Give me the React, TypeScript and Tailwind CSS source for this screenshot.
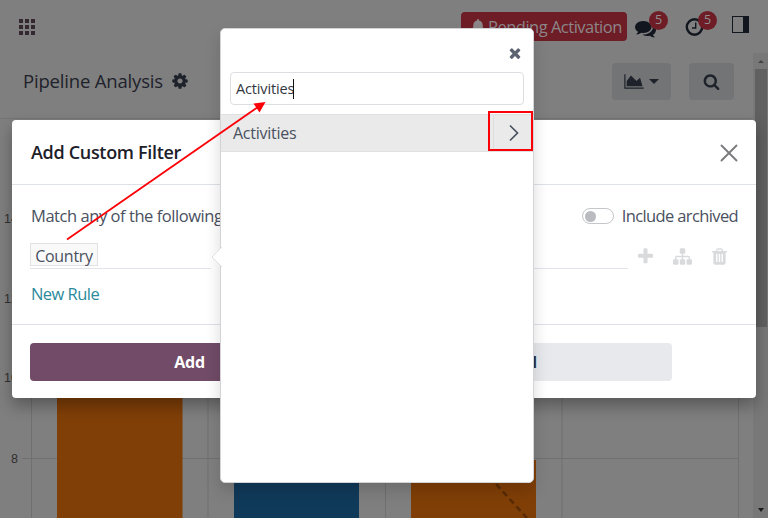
import type { ReactNode } from 'react';
import { FaBell } from 'react-icons/fa';

const COG =
  'M1152 896q0-106-75-181t-181-75-181 75-75 181 75 181 181 75 181-75 75-181zm512-109v222q0 12-8 23t-20 13l-185 28q-19 54-39 91 35 50 107 138 10 12 10 25t-9 23q-27 37-99 108t-94 71q-12 0-26-9l-138-108q-44 23-91 38-16 136-29 186-7 28-36 28h-222q-14 0-24.5-8.500t-11.500-21.500l-28-184q-49-16-90-37l-141 107q-10 9-25 9-14 0-25-11-126-114-165-168-7-10-7-23 0-12 8-23 15-21 51-66.500t54-70.500q-27-50-41-99l-183-27q-13-2-21-12.500t-8-23.500v-222q0-12 8-23t19-13l186-28q14-46 39-92-40-57-107-138-10-12-10-24 0-10 9-23 26-36 98.500-107.500t94.500-71.500q13 0 26 10l138 107q44-23 91-38 16-136 29-186 7-28 36-28h222q14 0 24.500 8.500t11.500 21.500l28 184q49 16 90 37l142-107q9-9 24-9 13 0 25 10 129 119 165 170 7 8 7 22 0 12-8 23-15 21-51 66.500t-54 70.500q26 50 41 98l183 28q13 2 21 12.500t8 23.500z';
const TRASH =
  'M704 1376v-704q0-14-9-23t-23-9h-64q-14 0-23 9t-9 23v704q0 14 9 23t23 9h64q14 0 23-9t9-23zm256 0v-704q0-14-9-23t-23-9h-64q-14 0-23 9t-9 23v704q0 14 9 23t23 9h64q14 0 23-9t9-23zm256 0v-704q0-14-9-23t-23-9h-64q-14 0-23 9t-9 23v704q0 14 9 23t23 9h64q14 0 23-9t9-23zm-544-992h448l-48-117q-7-9-17-11h-317q-10 2-17 11zm928 32v64q0 14-9 23t-23 9h-96v948q0 83-47 143.500t-113 60.500h-832q-66 0-113-58.500t-47-141.500v-952h-96q-14 0-23-9t-9-23v-64q0-14 9-23t23-9h309l70-167q15-37 54-63t79-26h320q40 0 79 26t54 63l70 167h309q14 0 23 9t9 23z';
const PLUS =
  'M1600 736v192q0 40-28 68t-68 28h-416v416q0 40-28 68t-68 28h-192q-40 0-68-28t-28-68v-416h-416q-40 0-68-28t-28-68v-192q0-40 28-68t68-28h416v-416q0-40 28-68t68-28h192q40 0 68 28t28 68v416h416q40 0 68 28t28 68z';
const SITEMAP =
  'M1792 1248v320q0 40-28 68t-68 28h-320q-40 0-68-28t-28-68v-320q0-40 28-68t68-28h96v-192h-512v192h96q40 0 68 28t28 68v320q0 40-28 68t-68 28h-320q-40 0-68-28t-28-68v-320q0-40 28-68t68-28h96v-192h-512v192h96q40 0 68 28t28 68v320q0 40-28 68t-68 28h-320q-40 0-68-28t-28-68v-320q0-40 28-68t68-28h96v-192q0-52 38-90t90-38h512v-192h-96q-40 0-68-28t-28-68v-320q0-40 28-68t68-28h320q40 0 68 28t28 68v320q0 40-28 68t-68 28h-96v192h512q52 0 90 38t38 90v192h96q40 0 68 28t28 68z';
const SEARCH =
  'M1216 832q0-185-131.500-316.500t-316.500-131.500-316.500 131.500-131.500 316.500 131.500 316.500 316.500 131.500 316.500-131.500 131.500-316.500zm512 832q0 52-38 90t-90 38q-54 0-90-38l-343-342q-179 124-399 124-143 0-273.500-55.500t-225-150-150-225-55.500-273.500 55.500-273.500 150-225 225-150 273.500-55.500 273.500 55.500 225 150 150 225 55.500 273.500q0 220-124 399l343 343q37 37 37 90z';
const TIMES =
  'M1490 1322q0 40-28 68l-136 136q-28 28-68 28t-68-28l-294-294-294 294q-28 28-68 28t-68-28l-136-136q-28-28-28-68t28-68l294-294-294-294q-28-28-28-68t28-68l136-136q28-28 68-28t68 28l294 294 294-294q28-28 68-28t68 28l136 136q28 28 28 68t-28 68l-294 294 294 294q28 28 28 68z';
const COMMENTS =
  'M1408 768q0 139-94 257t-256.500 186.500-353.500 68.500q-86 0-176-16-124 88-278 128-36 9-86 16h-3q-11 0-20.500-8t-11.500-21q-1-3-1-6.500t.5-6.500 2-6l2.500-5 3.500-5.500 4-5 4.500-5 4-4.500q5-6 23-25t26-29.500 22.500-29 25-38.500 20.500-44q-124-72-195-177t-71-224q0-139 94-257t256.500-186.500 353.500-68.500 353.500 68.500 256.500 186.500 94 257zm384 256q0 120-71 224.500t-195 176.500q10 24 20.500 44t25 38.500 22.500 29 26 29.500 23 25q1 1 4 4.500t4.500 5 4 5 3.500 5.500l2.500 5 2 6 .5 6.500-1 6.500q-3 14-13 22t-22 7q-50-7-86-16-154-40-278-128-90 16-176 16-271 0-472-132 58 4 88 4 161 0 309-45t264-129q125-92 192-212t67-254q0-77-23-152 129 71 204 178t75 230z';

function Icon({ d, className, box = '0 0 1792 1792' }: { d: string; className: string; box?: string }) {
  return (
    <svg viewBox={box} fill="currentColor" className={`shrink-0 ${className}`}>
      <path d={d} />
    </svg>
  );
}

function Counter({ children }: { children: ReactNode }) {
  return (
    <span className="absolute left-[14px] top-[-6px] flex h-[19px] w-[19px] items-center justify-center rounded-full bg-[#6e1d26] text-[12.500px] leading-none text-[#8f8f8f]">
      {children}
    </span>
  );
}

function Navbar() {
  return (
    <header className="flex h-[53px] shrink-0 items-center text-[#11161f]">
      <div className="ml-[19px] grid h-4 w-4 grid-cols-3 gap-[2px]">
        {Array.from({ length: 9 }, (_, i) => (
          <span key={i} className="h-[4px] w-[4px] bg-[#33282f]" />
        ))}
      </div>
      <div className="ml-[426px] flex h-[29px] w-[166px] items-center whitespace-nowrap rounded-[4px] bg-[#6e1d26] pl-[10px] text-[#8c8689]">
        <FaBell className="h-[15px] w-[14px]" />
        <span className="ml-[3px] pt-px text-[16.500px] tracking-[-0.5px]">Pending Activation</span>
      </div>
      <div className="relative ml-[8px] h-[20px] w-[20px]">
        <Icon d={COMMENTS} className="mt-px h-[21px] w-[21px]" />
        <Counter>5</Counter>
      </div>
      <div className="relative ml-[29px] h-[20px] w-[20px]">
        <svg viewBox="0 0 20 20" className="h-[20px] w-[20px]" fill="none" stroke="currentColor">
          <circle cx="10.500" cy="10" r="7.700" strokeWidth="2.400" />
          <path d="M11.700 5.500v5.500H8" strokeWidth="1.400" />
        </svg>
        <Counter>5</Counter>
      </div>
      <div className="ml-[28px] flex h-[17px] w-[17px] -translate-y-[2px] justify-end border border-[#11161f]">
        <span className="h-full w-[5px] bg-[#11161f]" />
      </div>
    </header>
  );
}

function ControlPanel() {
  return (
    <div className="flex h-[66px] shrink-0 items-center border-b border-[#747474] pb-[9px] text-[#1e222b]">
      <h1 className="ml-[23px] w-[150px] whitespace-nowrap text-[18.500px] tracking-[-0.18px]">Pipeline Analysis</h1>
      <Icon d={COG} className="-ml-[2px] h-[18px] w-[18px]" />
      <div className="ml-[423px] flex h-[37px] w-[59px] items-center rounded-[4px] bg-[#737475] pl-[12px]">
        <Icon
          d="M2048 1536v128h-2048v-1536h128v1408h1920zm-384-1024l256 896h-1664v-576l448-576 576 576z"
          box="0 0 2048 1792"
          className="h-[17px] w-[20px]"
        />
        <span className="ml-[5px] border-x-[5px] border-t-[5px] border-x-transparent border-t-[#1e222b]" />
      </div>
      <div className="ml-[18px] flex h-[37px] w-[45px] items-center justify-center rounded-[4px] bg-[#737475]">
        <Icon d={SEARCH} className="h-[17px] w-[17px]" />
      </div>
    </div>
  );
}

function Chart() {
  return (
    <svg viewBox="0 119 768 399" className="h-[399px] w-[768px] shrink-0">
      <g stroke="#707070" strokeWidth="1">
        <path d="M22 218.500H738M22 298.500H738M22 378.500H738M22 458.500H738" />
        <path d="M31.500 140V518M208 140V518M385.500 140V518M562 140V518M738.500 140V518" />
      </g>
      <g fontFamily="Liberation Sans, Arial, sans-serif" fontSize="12.500" fill="#303030">
        <text x="4" y="223">14</text>
        <text x="4" y="303">12</text>
        <text x="4" y="382">10</text>
        <text x="11" y="463">8</text>
      </g>
      <path d="M57 200H182.500V518H57z" fill="#803f07" />
      <path d="M234 200H359V518H234z" fill="#103a5a" />
      <path d="M411 460H536V518H411z" fill="#803f07" />
      <path d="M476 462L527 518" stroke="#572b06" strokeWidth="2.500" strokeDasharray="6 4" />
    </svg>
  );
}

function Scrollbar() {
  return (
    <div className="absolute right-0 top-[53px] flex h-[465px] w-[15px] flex-col items-center bg-[#787878]">
      <span className="mt-[7px] border-x-[3px] border-b-[3px] border-x-transparent border-b-[#454545]" />
      <span className="mt-[6px] h-[258px] w-[12px] bg-[#606060]" />
      <span className="mb-[6px] mt-auto border-x-[3.500px] border-t-[4px] border-x-transparent border-t-[#1c1c1f]" />
    </div>
  );
}

function FilterDialog() {
  return (
    <section className="absolute left-[12px] top-[120px] flex h-[278px] w-[744px] flex-col rounded-[4px] bg-white text-[#495060] shadow-[0_8px_16px_rgba(0,0,0,0.3)]">
      <div className="flex h-[65px] shrink-0 items-center border-b border-[#dee2e6] pl-[19px] pr-[18px] pt-px">
        <h2 className="whitespace-nowrap text-[18px] font-semibold tracking-[-0.32px] text-[#1c2029]">Add Custom Filter</h2>
        <svg viewBox="0 0 18 18" className="ml-auto h-[18px] w-[18px]">
          <path d="M1.500 1.500l15 15M16.500 1.500l-15 15" stroke="#7b7b7e" strokeWidth="1.900" strokeLinecap="round" />
        </svg>
      </div>
      <div className="flex flex-col pl-[18px] pr-[18px] pt-[19px]">
        <div className="flex h-[24px] items-center pl-px text-[16.500px]">
          <span className="whitespace-nowrap pt-px tracking-[-0.45px]">Match any of the following</span>
          <span className="ml-auto flex h-[16px] w-[32px] items-center rounded-full border border-[#c5c6ca] pl-[2px]">
            <span className="h-[11px] w-[11px] rounded-full bg-[#babbc0]" />
          </span>
          <span className="ml-[8px] whitespace-nowrap tracking-[-0.62px]">Include archived</span>
        </div>
        <div className="mt-[11px] flex h-[30px]">
          <div className="h-[30px] w-[181px] border-b border-[#e3e4ea] pt-[4px]">
            <div className="flex h-[23px] w-[68px] items-center justify-center border border-[#dfe1e5] bg-[#f9f9fa] pt-[2px] text-[16px] tracking-[-0.3px]">
              Country
            </div>
          </div>
          <div className="ml-[20px] h-[30px] w-[397px] border-b border-[#e3e4ea]" />
          <div className="ml-[8px] flex h-[30px] items-center gap-[18px] pt-[4px] text-[#d9dadc]">
            <Icon d={PLUS} className="h-[19px] w-[19px]" />
            <Icon d={SITEMAP} className="h-[19px] w-[19px]" />
            <Icon d={TRASH} className="h-[19px] w-[19px]" />
          </div>
        </div>
        <a className="mt-[13px] pl-px text-[16.500px] leading-[24px] tracking-[-0.55px] text-[#2b8a9c]">New Rule</a>
      </div>
      <div className="mt-auto flex h-[74px] items-center gap-[4px] border-t border-[#dee2e6] px-[18px] text-[16px] font-bold tracking-[-0.2px]">
        <button className="h-[38px] w-[319px] rounded-[4px] bg-[#714b67] text-white">Add</button>
        <button className="h-[38px] w-[319px] rounded-[4px] bg-[#e7e9ed] pr-[3px] text-[#2f3340]">Cancel</button>
      </div>
    </section>
  );
}

function FieldPopover() {
  return (
    <section className="absolute left-[220px] top-[28px] flex h-[455px] w-[314px] flex-col rounded-[5px] border border-[#d3d4d8] bg-white text-[#495060] shadow-[0_8px_16px_rgba(0,0,0,0.15)]">
      <svg viewBox="0 0 11 20" className="absolute left-[-10px] top-[218px] h-[20px] w-[11px]">
        <path d="M11 0L1 10L11 20" fill="#fff" stroke="#dfe0e3" />
      </svg>
      <div className="flex h-[43px] shrink-0 items-center justify-end pr-[10px] pt-[5px]">
        <Icon d={TIMES} className="h-[16px] w-[16px] text-[#5d6370]" />
      </div>
      <div className="mx-[9px] flex h-[33px] shrink-0 items-center rounded-[4px] border border-[#dcdee1] pl-[5px] text-[14.500px] text-[#33373f]">
        <span className="whitespace-nowrap pt-px tracking-[-0.15px]">Activities</span>
        <span className="-ml-px h-[20px] w-px bg-[#111]" />
      </div>
      <div className="mt-[9px] flex h-[38px] shrink-0 items-center border-y border-[#dfe0e2] bg-[#eaeaea] pl-[12px] text-[16px]">
        <span className="whitespace-nowrap tracking-[-0.25px]">Activities</span>
        <span className="ml-auto flex h-full w-[40px] items-center justify-center border-l border-[#dedede]">
          <svg viewBox="0 0 10 18" className="h-[18px] w-[10px]" fill="none">
            <path d="M1 1.500L8.500 9L1 16.500" stroke="#4a5160" strokeWidth="1.700" />
          </svg>
        </span>
      </div>
    </section>
  );
}

function Annotations() {
  return (
    <svg viewBox="0 0 768 518" className="absolute inset-0 h-[518px] w-[768px]" fill="none" stroke="#fb0007">
      <path d="M67 239.500L258 107" strokeWidth="1.700" />
      <path d="M265.500 102L259.500 112.500L253.500 103.500z" fill="#fb0007" stroke="none" />
      <rect x="489" y="112" width="43" height="38" strokeWidth="2" />
    </svg>
  );
}

export default function App() {
  return (
    <main className="relative flex h-[518px] w-[768px] flex-col overflow-hidden bg-[#7f7f7f] font-['Open_Sans','Noto_Sans',sans-serif]">
      <Navbar />
      <ControlPanel />
      <Chart />
      <Scrollbar />
      <FilterDialog />
      <FieldPopover />
      <Annotations />
    </main>
  );
}
